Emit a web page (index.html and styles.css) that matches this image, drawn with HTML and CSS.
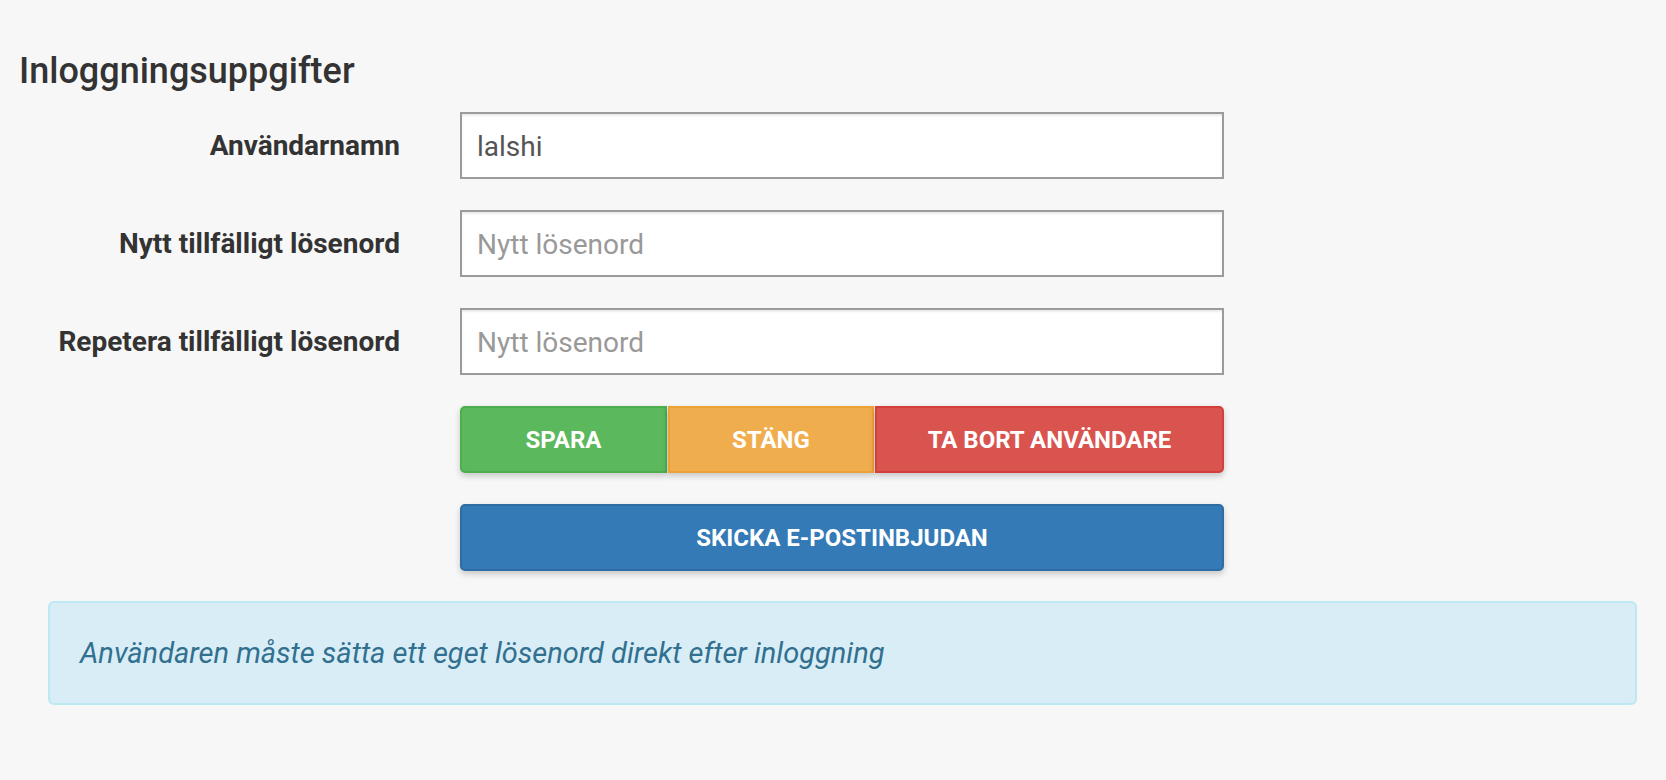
FILE: index.html
```html
<!DOCTYPE html>
<html lang="sv">
<head>
<meta charset="utf-8">
<title>Inloggningsuppgifter</title>
<link rel="stylesheet" href="styles.css">
</head>
<body>
<div class="page">
  <h1 class="title">Inloggningsuppgifter</h1>
  <form class="form" onsubmit="return false">
    <label class="label" for="u">Användarnamn</label>
    <input class="field" id="u" type="text" value="lalshi">
    <label class="label" for="p1">Nytt tillfälligt lösenord</label>
    <input class="field" id="p1" type="password" placeholder="Nytt lösenord">
    <label class="label" for="p2">Repetera tillfälligt lösenord</label>
    <input class="field" id="p2" type="password" placeholder="Nytt lösenord">
    <div class="spacer"></div>
    <div class="btn-group">
      <button class="btn btn-green btn-first" type="button">Spara</button>
      <button class="btn btn-orange" type="button">Stäng</button>
      <button class="btn btn-red btn-last" type="button">Ta bort användare</button>
    </div>
    <div class="spacer"></div>
    <button class="btn btn-blue btn-block" type="button">Skicka e-postinbjudan</button>
  </form>
  <div class="alert">Användaren måste sätta ett eget lösenord direkt efter inloggning</div>
</div>
</body>
</html>
```
FILE: styles.css
```css
html, body {
  margin: 0;
  padding: 0;
  background: #f7f7f7;
}
body {
  font-family: Roboto, "Liberation Sans", Arial, sans-serif;
  color: #333;
}
.page {
  padding: 50px 0 0 20px;
}
.title {
  margin: 0 0 0 -1px;
  font-size: 36px;
  line-height: 42px;
  font-weight: 500;
  color: #333;
}
.form {
  margin-top: 20px;
  display: grid;
  grid-template-columns: 380px 764px;
  column-gap: 60px;
  row-gap: 31px;
  align-items: center;
}
.label {
  text-align: right;
  font-size: 28px;
  font-weight: 700;
  color: #333;
}
.field {
  box-sizing: border-box;
  height: 67px;
  width: 100%;
  margin: 0;
  padding: 2px 15px 0;
  border: 2px solid #9b9b9b;
  border-radius: 0;
  background: #fff;
  box-shadow: inset 0 2px 2px rgba(0, 0, 0, 0.075);
  font-family: Roboto, "Liberation Sans", Arial, sans-serif;
  font-size: 28px;
  color: #555;
  outline: none;
}
.field::placeholder {
  color: #999;
}
.btn-group {
  display: grid;
  grid-template-columns: 207fr 206fr 349fr;
  column-gap: 1px;
}
.btn {
  box-sizing: border-box;
  height: 67px;
  margin: 0;
  padding: 0;
  border: 2px solid transparent;
  font-family: Roboto, "Liberation Sans", Arial, sans-serif;
  font-size: 24px;
  font-weight: 700;
  text-transform: uppercase;
  color: #fff;
  box-shadow: 0 3px 6px rgba(0, 0, 0, 0.2);
  border-radius: 0;
  cursor: pointer;
}
.btn-first {
  border-radius: 5px 0 0 5px;
}
.btn-last {
  border-radius: 0 5px 5px 0;
}
.btn-green {
  background: #5cb85c;
  border-color: #4cae4c;
}
.btn-orange {
  background: #f0ad4e;
  border-color: #eea236;
}
.btn-red {
  background: #d9534f;
  border-color: #d43f3a;
}
.btn-blue {
  background: #337ab7;
  border-color: #2e6da4;
  border-radius: 5px;
}
.btn-block {
  width: 100%;
}
.alert {
  box-sizing: border-box;
  margin: 30px 29px 0 28px;
  height: 104px;
  display: flex;
  align-items: center;
  padding: 0 30px;
  background: #d9edf7;
  border: 2px solid #bce8f1;
  border-radius: 6px;
  color: #31708f;
  font-size: 29px;
  font-style: italic;
}
```
